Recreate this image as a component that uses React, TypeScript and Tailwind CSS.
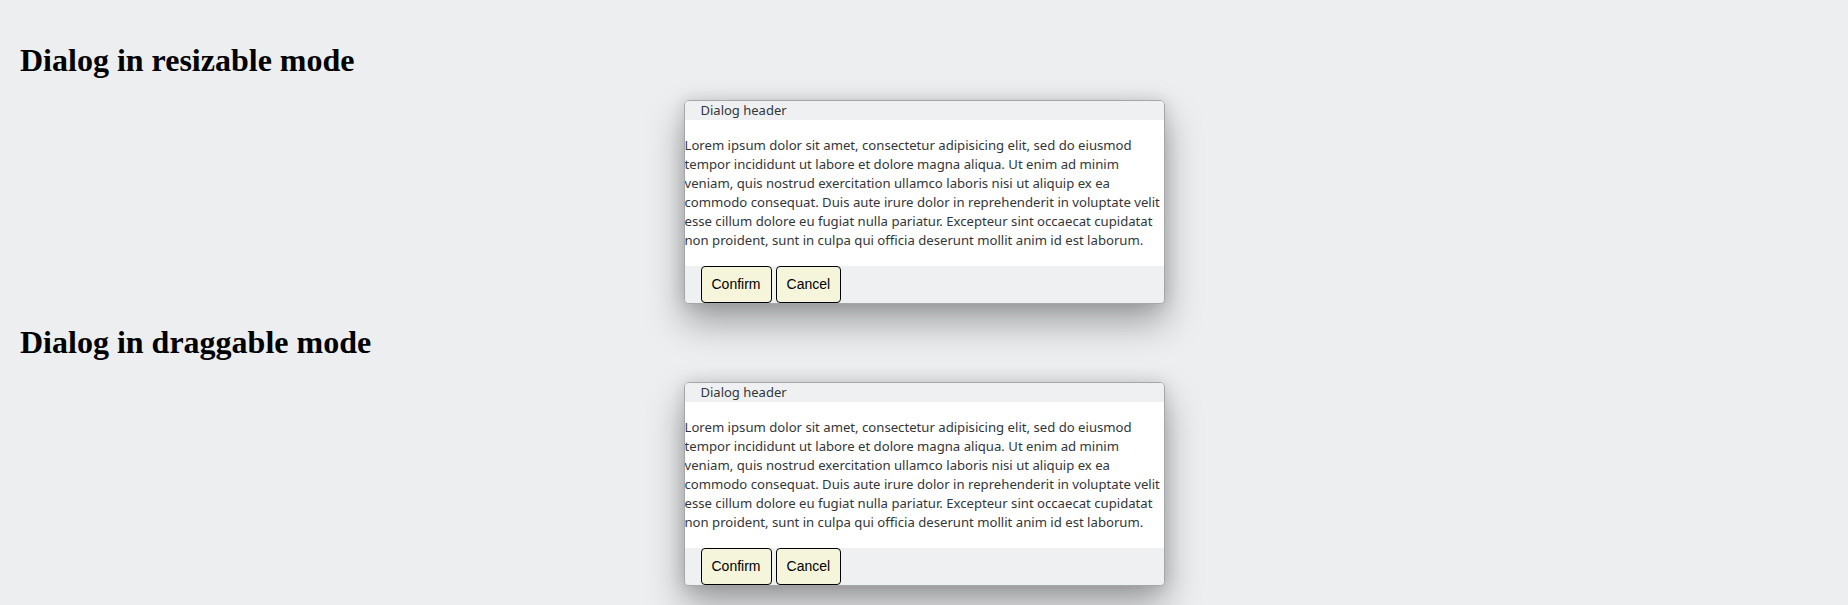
import React from 'react'

const LOREM =
  'Lorem ipsum dolor sit amet, consectetur adipisicing elit, sed do eiusmod tempor incididunt ut labore et dolore magna aliqua. Ut enim ad minim veniam, quis nostrud exercitation ullamco laboris nisi ut aliquip ex ea commodo consequat. Duis aute irure dolor in reprehenderit in voluptate velit esse cillum dolore eu fugiat nulla pariatur. Excepteur sint occaecat cupidatat non proident, sunt in culpa qui officia deserunt mollit anim id est laborum.'

function DialogButton({ children }: { children: React.ReactNode }) {
  return (
    <button className="h-[37px] rounded-[4px] border border-black bg-[#f5f5dc] px-[10px] font-['Liberation_Sans',sans-serif] text-[14px] text-black">
      {children}
    </button>
  )
}

function Dialog() {
  return (
    <div className="mx-auto w-[481px] overflow-hidden rounded-[5px] border border-[#a4a6a8] bg-white shadow-[0_0_16px_rgba(0,0,0,0.13),0_18px_36px_rgba(0,0,0,0.34)]">
      {/* header */}
      <div className="flex h-[19px] items-center bg-[#eef0f1] px-4 font-['Noto_Sans',sans-serif] text-[13px] text-[#32363a]">
        Dialog header
      </div>
      {/* content */}
      <div className="bg-white py-4 font-['Noto_Sans',sans-serif] text-[13.15px] leading-[19px] text-[#32363a]">
        {LOREM}
      </div>
      {/* footer */}
      <div className="flex h-[37px] items-start gap-1 bg-[#eef0f1] px-4">
        <DialogButton>Confirm</DialogButton>
        <DialogButton>Cancel</DialogButton>
      </div>
    </div>
  )
}

export default function App() {
  return (
    <div className="min-h-[605px] bg-[#edeef0] px-5 pt-[21px]">
      <h1 className="my-[21px] font-['Liberation_Serif',serif] text-[32px] font-bold leading-[37px] text-black">
        Dialog in resizable mode
      </h1>
      <Dialog />
      <h1 className="mt-[20px] mb-[21px] font-['Liberation_Serif',serif] text-[32px] font-bold leading-[37px] text-black">
        Dialog in draggable mode
      </h1>
      <Dialog />
    </div>
  )
}
